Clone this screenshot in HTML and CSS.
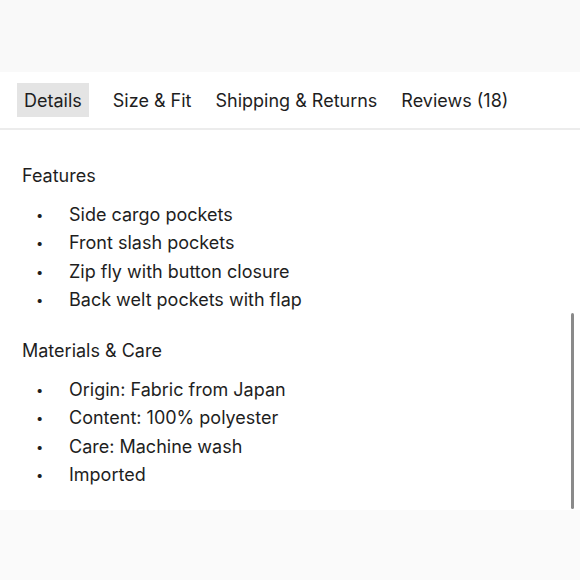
FILE: index.html
```html
<!DOCTYPE html>
<html>
<head>
<meta charset="utf-8">
<link rel="stylesheet" href="styles.css">
</head>
<body>
<div class="top-band"></div>
<div class="panel">
  <nav class="tabs">
    <span class="tab active">Details</span>
    <span class="tab">Size &amp; Fit</span>
    <span class="tab">Shipping &amp; Returns</span>
    <span class="tab">Reviews (18)</span>
  </nav>
  <div class="content">
    <h3 class="heading">Features</h3>
    <ul class="list">
      <li>Side cargo pockets</li>
      <li>Front slash pockets</li>
      <li>Zip fly with button closure</li>
      <li>Back welt pockets with flap</li>
    </ul>
    <h3 class="heading">Materials &amp; Care</h3>
    <ul class="list">
      <li>Origin: Fabric from Japan</li>
      <li>Content: 100% polyester</li>
      <li>Care: Machine wash</li>
      <li>Imported</li>
    </ul>
    <div class="scrollbar"></div>
  </div>
</div>
<div class="bottom-band"></div>
</body>
</html>
```

FILE: styles.css
```css
html, body {
  margin: 0;
  padding: 0;
  background: #fff;
  width: 580px;
  height: 580px;
  overflow: hidden;
  font-family: "Inter", "Noto Sans", sans-serif;
  color: #1e1e1e;
}
.top-band {
  height: 72px;
  background: #f9f9f9;
}
.panel {
  position: relative;
}
.tabs {
  display: flex;
  align-items: center;
  gap: 24px;
  height: 56px;
  padding-left: 17px;
  border-bottom: 2px solid #ececec;
  font-size: 18px;
  line-height: 22px;
}
.tab {
  padding: 7px 0 5px 0;
}
.tab.active {
  background: #e4e4e4;
  padding: 7px 7px 5px 7px;
}
.content {
  position: relative;
  box-sizing: border-box;
  padding: 34px 0 0 22px;
  height: 380px;
}
.heading {
  margin: 0;
  font-size: 18px;
  font-weight: 400;
  line-height: 24px;
}
.list {
  list-style: none;
  margin: 13px 0 25px 0;
  padding: 0;
  font-size: 18px;
  line-height: 28.3px;
}
.list li {
  display: flex;
}
.list li::before {
  content: "\2022";
  width: 33px;
  margin-left: 14px;
  font-size: 13px;
}
.scrollbar {
  position: absolute;
  right: 6px;
  top: 183px;
  width: 3px;
  height: 196px;
  border-radius: 2px;
  background: #8a8a8a;
}
.bottom-band {
  height: 70px;
  background: #fafafa;
}
```
